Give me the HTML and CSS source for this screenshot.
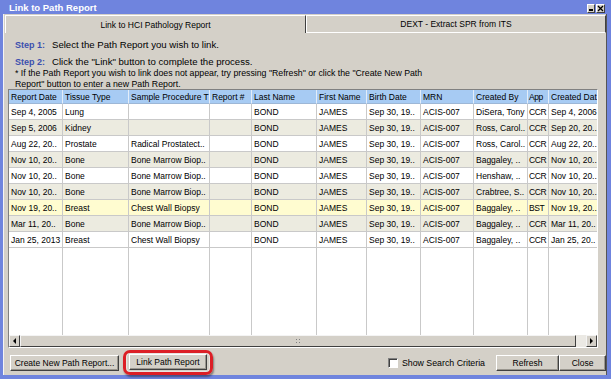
FILE: index.html
```html
<!DOCTYPE html>
<html lang="en">
<head>
    <meta charset="UTF-8">
    <meta name="viewport" content="width=device-width, initial-scale=1.0">
    <title>Link to Path Report</title>
    <link rel="stylesheet" href="styles.css">
</head>
<body>
<div class="window">
    <div class="titlebar">
        <span class="title">Link to Path Report</span>
        <div class="title-btns">
            <span class="tbtn tbtn-min"></span>
            <span class="tbtn tbtn-close">
                <svg width="7" height="7" viewBox="0 0 7 7"><path d="M1 1L6 6M6 1L1 6" stroke="#000" stroke-width="1.3"/></svg>
            </span>
        </div>
    </div>

    <div class="client">
        <div class="tabs">
            <div class="tab active">Link to HCI Pathology Report</div>
            <div class="tab">DEXT - Extract SPR from ITS</div>
        </div>

        <div class="panel">
            <p class="step"><span class="step-label">Step 1:</span>Select the Path Report you wish to link.</p>
            <p class="step step2"><span class="step-label">Step 2:</span>Click the "Link" button to complete the process.</p>
            <p class="note">* If the Path Report you wish to link does not appear, try pressing "Refresh" or click the "Create New Path<br>Report" button to enter a new Path Report.</p>

            <div class="scroll-pane">
                <div class="viewport">
                    <table id="reportTable">
                        <thead>
                            <tr>
                                <th class="c1">Report Date</th>
                                <th class="c2">Tissue Type</th>
                                <th class="c3">Sample Procedure T</th>
                                <th class="c4">Report #</th>
                                <th class="c5">Last Name</th>
                                <th class="c6">First Name</th>
                                <th class="c7">Birth Date</th>
                                <th class="c8">MRN</th>
                                <th class="c9">Created By</th>
                                <th class="c10">App</th>
                                <th class="c11">Created Dat</th>
                            </tr>
                        </thead>
                        <tbody>
                            <tr>
                                <td>Sep 4, 2005</td><td>Lung</td><td></td><td></td><td>BOND</td><td>JAMES</td>
                                <td>Sep 30, 19..</td><td>ACIS-007</td><td>DiSera, Tony</td><td>CCR</td><td>Sep 4, 2006</td>
                            </tr>
                            <tr class="alt">
                                <td>Sep 5, 2006</td><td>Kidney</td><td></td><td></td><td>BOND</td><td>JAMES</td>
                                <td>Sep 30, 19..</td><td>ACIS-007</td><td>Ross, Carol..</td><td>CCR</td><td>Sep 20, 20..</td>
                            </tr>
                            <tr>
                                <td>Aug 22, 20..</td><td>Prostate</td><td>Radical Prostatect..</td><td></td><td>BOND</td><td>JAMES</td>
                                <td>Sep 30, 19..</td><td>ACIS-007</td><td>Ross, Carol..</td><td>CCR</td><td>Aug 22, 20..</td>
                            </tr>
                            <tr class="alt">
                                <td>Nov 10, 20..</td><td>Bone</td><td>Bone Marrow Biop..</td><td></td><td>BOND</td><td>JAMES</td>
                                <td>Sep 30, 19..</td><td>ACIS-007</td><td>Baggaley, ..</td><td>CCR</td><td>Nov 10, 20..</td>
                            </tr>
                            <tr>
                                <td>Nov 10, 20..</td><td>Bone</td><td>Bone Marrow Biop..</td><td></td><td>BOND</td><td>JAMES</td>
                                <td>Sep 30, 19..</td><td>ACIS-007</td><td>Henshaw, ..</td><td>CCR</td><td>Nov 10, 20..</td>
                            </tr>
                            <tr class="alt">
                                <td>Nov 10, 20..</td><td>Bone</td><td>Bone Marrow Biop..</td><td></td><td>BOND</td><td>JAMES</td>
                                <td>Sep 30, 19..</td><td>ACIS-007</td><td>Crabtree, S..</td><td>CCR</td><td>Nov 10, 20..</td>
                            </tr>
                            <tr class="selected">
                                <td>Nov 19, 20..</td><td>Breast</td><td>Chest Wall Biopsy</td><td></td><td>BOND</td><td>JAMES</td>
                                <td>Sep 30, 19..</td><td>ACIS-007</td><td>Baggaley, ..</td><td>BST</td><td>Nov 19, 20..</td>
                            </tr>
                            <tr class="alt">
                                <td>Mar 11, 20..</td><td>Bone</td><td>Bone Marrow Biop..</td><td></td><td>BOND</td><td>JAMES</td>
                                <td>Sep 30, 19..</td><td>ACIS-007</td><td>Baggaley, ..</td><td>CCR</td><td>Mar 11, 20..</td>
                            </tr>
                            <tr>
                                <td>Jan 25, 2013</td><td>Breast</td><td>Chest Wall Biopsy</td><td></td><td>BOND</td><td>JAMES</td>
                                <td>Sep 30, 19..</td><td>ACIS-007</td><td>Baggaley, ..</td><td>CCR</td><td>Jan 25, 20..</td>
                            </tr>
                            <!-- empty space below the rows, keeps the column lines -->
                            <tr class="filler">
                                <td></td><td></td><td></td><td></td><td></td><td></td><td></td><td></td><td></td><td></td><td></td>
                            </tr>
                        </tbody>
                    </table>
                </div>
                <div class="hscroll">
                    <span class="sb-btn"><span class="arrow arrow-left"></span></span>
                    <span class="sb-thumb">
                        <svg width="4" height="5" viewBox="0 0 4 5"><path d="M0 0h1v1H0zM0 3h1v1H0zM3 0h1v1H3zM3 3h1v1H3z" fill="#808080"/></svg>
                    </span>
                    <span class="sb-track"></span>
                    <span class="sb-btn"><span class="arrow arrow-right"></span></span>
                </div>
            </div>
        </div>

        <div class="actions">
            <button type="button" class="btn btn-create">Create New Path Report...</button>
            <div class="highlight">
                <button type="button" class="btn btn-link">Link Path Report</button>
            </div>
            <label class="check">
                <span class="check-box"></span>
                Show Search Criteria
            </label>
            <button type="button" class="btn btn-refresh">Refresh</button>
            <button type="button" class="btn btn-close">Close</button>
        </div>
    </div>
</div>
</body>
</html>
```

FILE: styles.css
```css
* {
    box-sizing: border-box;
}

body {
    margin: 0;
    font-family: "Liberation Sans", Arial, sans-serif;
    font-size: 9px;
    color: #000;
    background-color: #6f84de;
}

.window {
    width: 611px;
    height: 379px;
    display: flex;
    flex-direction: column;
    padding: 0 4px 4px 3px;
    background-color: #6f84de;
}

.titlebar {
    height: 14px;
    flex: none;
    display: flex;
    justify-content: space-between;
    align-items: center;
    padding: 0 2px 0 6px;
    color: white;
}

.title {
    font-size: 9.5px;
    font-weight: bold;
}

.title-btns {
    display: flex;
    gap: 1px;
    padding-top: 2px;
}

.tbtn {
    width: 8px;
    height: 9px;
    display: flex;
    align-items: center;
    justify-content: center;
    background-color: #d4d0c8;
    border: 1px solid;
    border-color: #fff #404040 #404040 #fff;
}

.tbtn-close {
    width: 9px;
}

.tbtn-min::after {
    content: "";
    width: 4px;
    height: 2px;
    margin-top: 4px;
    background-color: #000;
}

.client {
    flex: 1;
    display: flex;
    flex-direction: column;
    background-color: #d4d0c8;
    border-left: 1px solid #f4f4f4;
    border-right: 1px solid #555;
}

/* tabs */
.tabs {
    display: flex;
    height: 19px;
    flex: none;
    padding: 0 0 0 1px;
}

.tab {
    display: flex;
    align-items: center;
    justify-content: center;
    font-size: 8.5px;
    border-top: 1px solid #fff;
    border-left: 1px solid #fff;
    border-right: 1px solid #404040;
    border-bottom: 1px solid #fff;
    margin-top: 1px;
}

.tab.active {
    width: 301px;
    border-bottom: none;
}

.tab:not(.active) {
    flex: 1;
}

/* steps */
.panel {
    padding-top: 6px;
    flex: none;
}

.step {
    margin: 0;
    padding-left: 11px;
    height: 12px;
    line-height: 12px;
    font-size: 9.6px;
}

.step2 {
    margin-top: 5px;
}

.step-label {
    display: inline-block;
    width: 37px;
    font-size: 9px;
    font-weight: bold;
    color: #3b4fae;
}

.note {
    margin: 0;
    padding-left: 11px;
    height: 21px;
    line-height: 10.5px;
    font-size: 8.75px;
    white-space: nowrap;
    overflow: hidden;
}

/* table */
.scroll-pane {
    margin: 0 8px 0 4px;
    border: 1px solid;
    border-color: #808080 #fff #fff #808080;
}

.viewport {
    height: 245px;
    overflow: hidden;
    background-color: white;
}

table {
    width: 589px;
    table-layout: fixed;
    border-collapse: separate;
    border-spacing: 0;
}

th, td {
    padding: 0 2px;
    font-size: 8.5px;
    font-weight: normal;
    text-align: left;
    white-space: nowrap;
    overflow: hidden;
    border-right: 1px solid #c9c9c9;
    border-bottom: 1px solid #c9c9c9;
}

th {
    height: 14px;
    background-color: #a7cbf3;
    border-right-color: #e3edf9;
    border-bottom-color: #9db7d6;
}

td {
    height: 16px;
}

th:last-child, td:last-child {
    border-right: none;
}

/* App column is narrow, text sits closer to the lines */
th:nth-child(10), td:nth-child(10) {
    padding: 0 0 0 1px;
    letter-spacing: -0.4px;
}

.c1 { width: 54px; }
.c2 { width: 66px; }
.c3 { width: 81px; }
.c4 { width: 42px; }
.c5 { width: 65px; }
.c6 { width: 50px; }
.c7 { width: 54px; }
.c8 { width: 53px; }
.c9 { width: 54px; }
.c10 { width: 21px; }
.c11 { width: 49px; }

tr.alt td {
    background-color: #ecebe0;
}

tr.selected td {
    background-color: #fffcd0;
}

tr.filler td {
    height: 87px;
    border-bottom: none;
}

/* horizontal scrollbar */
.hscroll {
    display: flex;
    height: 12px;
    background-color: #ebe9e4;
}

.sb-btn, .sb-thumb {
    display: flex;
    align-items: center;
    justify-content: center;
    background-color: #d4d0c8;
    border: 1px solid;
    border-color: #f4f4f4 #404040 #404040 #f4f4f4;
}

.sb-btn {
    width: 11px;
}

.sb-thumb {
    width: 557px;
}

.sb-track {
    width: 10px;
}

.arrow {
    width: 0;
    height: 0;
    border-top: 3px solid transparent;
    border-bottom: 3px solid transparent;
}

.arrow-left {
    border-right: 3px solid #000;
}

.arrow-right {
    border-left: 3px solid #000;
}

/* bottom buttons */
.actions {
    height: 27px;
    flex: none;
    display: flex;
    align-items: center;
    padding: 2px 0 0 6px;
}

.btn {
    height: 16px;
    padding: 0;
    font-family: "Liberation Sans", Arial, sans-serif;
    font-size: 8.5px;
    color: #000;
    background-color: #d4d0c8;
    border: 1px solid;
    border-color: #fff #404040 #404040 #fff;
    box-shadow: inset -1px -1px 0 #9a968e;
}

.btn-create {
    width: 109px;
}

.highlight {
    margin-left: 4px;
    padding: 1px 3px 2px;
    border: 3px solid #dc1f26;
    border-radius: 7px;
    box-shadow: inset 0 0 0 1px rgba(255, 255, 255, 0.45), 1px 2px 2px rgba(0, 0, 0, 0.4);
}

.btn-link {
    width: 78px;
    display: block;
}

.check {
    margin-left: auto;
    margin-right: 11px;
    display: flex;
    align-items: center;
    gap: 4px;
    font-size: 8.8px;
}

.check-box {
    width: 10px;
    height: 10px;
    background-color: white;
    border: 1px solid;
    border-color: #808080 #fff #fff #808080;
    box-shadow: inset 1px 1px 0 #404040;
}

.btn-refresh {
    width: 63px;
}

.btn-close {
    width: 47px;
}
```
